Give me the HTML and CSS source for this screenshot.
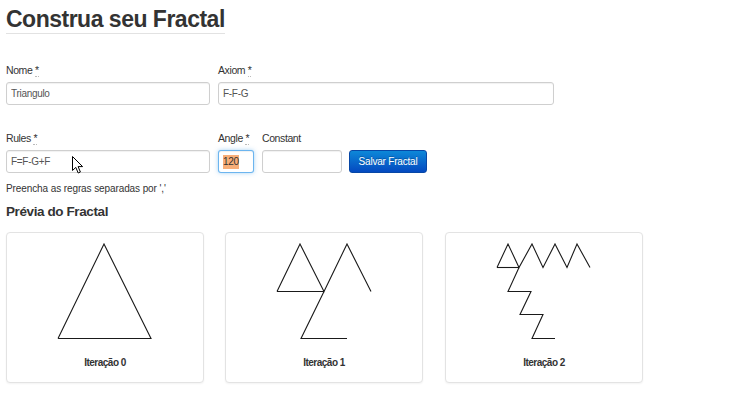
FILE: index.html
```html
<!DOCTYPE html>
<html>
<head>
<meta charset="utf-8">
<link rel="stylesheet" href="styles.css">
</head>
<body>
<div class="page">
  <h1 class="title">Construa seu Fractal</h1>

  <div class="row row-first">
    <div class="field">
      <label class="lbl">Nome <abbr>*</abbr></label>
      <input class="inp w-name" type="text" value="Triangulo">
    </div>
    <div class="field">
      <label class="lbl">Axiom <abbr>*</abbr></label>
      <input class="inp w-axiom" type="text" value="F-F-G">
    </div>
  </div>

  <div class="row row-second">
    <div class="field">
      <label class="lbl">Rules <abbr>*</abbr></label>
      <input class="inp w-name" type="text" value="F=F-G+F">
    </div>
    <div class="field">
      <label class="lbl">Angle <abbr>*</abbr></label>
      <div class="inp w-angle focus"><span class="sel">120</span></div>
    </div>
    <div class="field">
      <label class="lbl">Constant</label>
      <input class="inp w-const" type="text" value="">
    </div>
    <button class="btn">Salvar Fractal</button>
  </div>

  <p class="help">Preencha as regras separadas por ','</p>
  <h2 class="sub">Prévia do Fractal</h2>

  <div class="cards">
    <div class="card">
      <svg class="fr" width="196" height="118" viewBox="0 0 196 118">
        <polyline points="51,105.5 144,105.5 97,11 51,105.5" />
      </svg>
      <div class="cap">Iteração 0</div>
    </div>
    <div class="card">
      <svg class="fr" width="196" height="118" viewBox="0 0 196 118">
        <polyline points="51,58.5 98,58.5" />
        <polyline points="51,58.5 74,11 98,58.5 121,11 145,58.5" />
        <polyline points="98,58.5 75,105.5 121,105.5" />
      </svg>
      <div class="cap">Iteração 1</div>
    </div>
    <div class="card">
      <svg class="fr" width="196" height="118" viewBox="0 0 196 118">
        <polyline points="51,34.5 73,34.5" />
        <polyline points="51,34.5 62,11 73,34.5 86,11 97,34.5 109,11 121,34.5 131,11 144,34.5" />
        <polyline points="73,34.5 62,58.5 85,58.5 74,81.5 97,81.5 86,105.5 109,105.5" />
      </svg>
      <div class="cap">Iteração 2</div>
    </div>
  </div>

  <svg class="cursor" width="12" height="19" viewBox="0 0 12 19">
    <path d="M0.5,0.5 L0.5,14.5 L3.8,11.4 L6.2,17 L8.4,16 L6.1,10.6 L10.6,10.6 Z" fill="#fff" stroke="#000" stroke-width="1"/>
  </svg>
</div>
</body>
</html>
```

FILE: styles.css
```css
html, body {
  margin: 0;
  padding: 0;
  background: #fff;
}

body {
  font-family: "Liberation Sans", Arial, sans-serif;
  color: #333;
}

.page {
  position: relative;
  padding: 0 6px;
  width: 728px;
  height: 400px;
  overflow: hidden;
}

.title {
  display: inline-block;
  margin: 0;
  padding-top: 5px;
  font-size: 23px;
  line-height: 28px;
  font-weight: bold;
  letter-spacing: -0.5px;
  color: #333;
  border-bottom: 1px solid #e2e2e2;
}

.row {
  display: flex;
  align-items: flex-end;
  gap: 8px;
}

.row-first {
  margin-top: 29px;
}

.row-second {
  margin-top: 26px;
}

.field {
  display: flex;
  flex-direction: column;
}

.lbl {
  font-size: 10.5px;
  line-height: 14px;
  letter-spacing: -0.4px;
  color: #333;
  margin-bottom: 5px;
}

.lbl abbr {
  text-decoration: none;
  border-bottom: 1px dotted #bbb;
}

.inp {
  box-sizing: border-box;
  height: 23px;
  margin: 0;
  padding: 0 4px;
  border: 1px solid #cfcfcf;
  border-radius: 3px;
  box-shadow: inset 0 1px 1px rgba(0, 0, 0, 0.06);
  font-family: "Liberation Sans", Arial, sans-serif;
  font-size: 10px;
  letter-spacing: -0.3px;
  color: #555;
  background: #fff;
  outline: none;
}

.w-name { width: 204px; }
.w-axiom { width: 336px; }
.w-angle { width: 36px; }
.w-const { width: 80px; }

.focus {
  display: flex;
  align-items: center;
  border-color: rgba(82, 168, 236, 0.85);
  box-shadow: inset 0 1px 1px rgba(0, 0, 0, 0.06), 0 0 4px rgba(82, 168, 236, 0.5);
}

.sel {
  background: #f8ae78;
  color: #333;
  line-height: 14px;
}

.btn {
  box-sizing: border-box;
  height: 23px;
  width: 78px;
  margin-left: -1px;
  padding: 0;
  border: 1px solid #0747a6;
  border-radius: 3px;
  background: linear-gradient(to bottom, #0d88d8, #0449c0);
  color: #fff;
  font-family: "Liberation Sans", Arial, sans-serif;
  font-size: 10px;
  letter-spacing: -0.2px;
  text-shadow: 0 -1px 0 rgba(0, 0, 0, 0.25);
}

.help {
  margin: 9px 0 0;
  font-size: 10px;
  line-height: 14px;
  letter-spacing: -0.1px;
  color: #333;
}

.sub {
  margin: 7px 0 0;
  font-size: 13.5px;
  line-height: 18px;
  font-weight: bold;
  letter-spacing: -0.4px;
  color: #333;
}

.cards {
  display: flex;
  gap: 21px;
  margin-top: 11px;
}

.card {
  box-sizing: border-box;
  width: 198px;
  height: 151px;
  border: 1px solid #e3e3e3;
  border-radius: 4px;
  box-shadow: 0 1px 2px rgba(0, 0, 0, 0.05);
  background: #fff;
}

.card + .card + .card {
  margin-left: 1px;
}

.fr {
  display: block;
}

.fr polyline {
  fill: none;
  stroke: #1a1a1a;
  stroke-width: 1.1;
  stroke-linejoin: miter;
}

.cap {
  margin-top: 5px;
  text-align: center;
  font-size: 10px;
  line-height: 14px;
  font-weight: bold;
  letter-spacing: -0.5px;
  color: #333;
}

.cursor {
  position: absolute;
  left: 72px;
  top: 156px;
}
```
